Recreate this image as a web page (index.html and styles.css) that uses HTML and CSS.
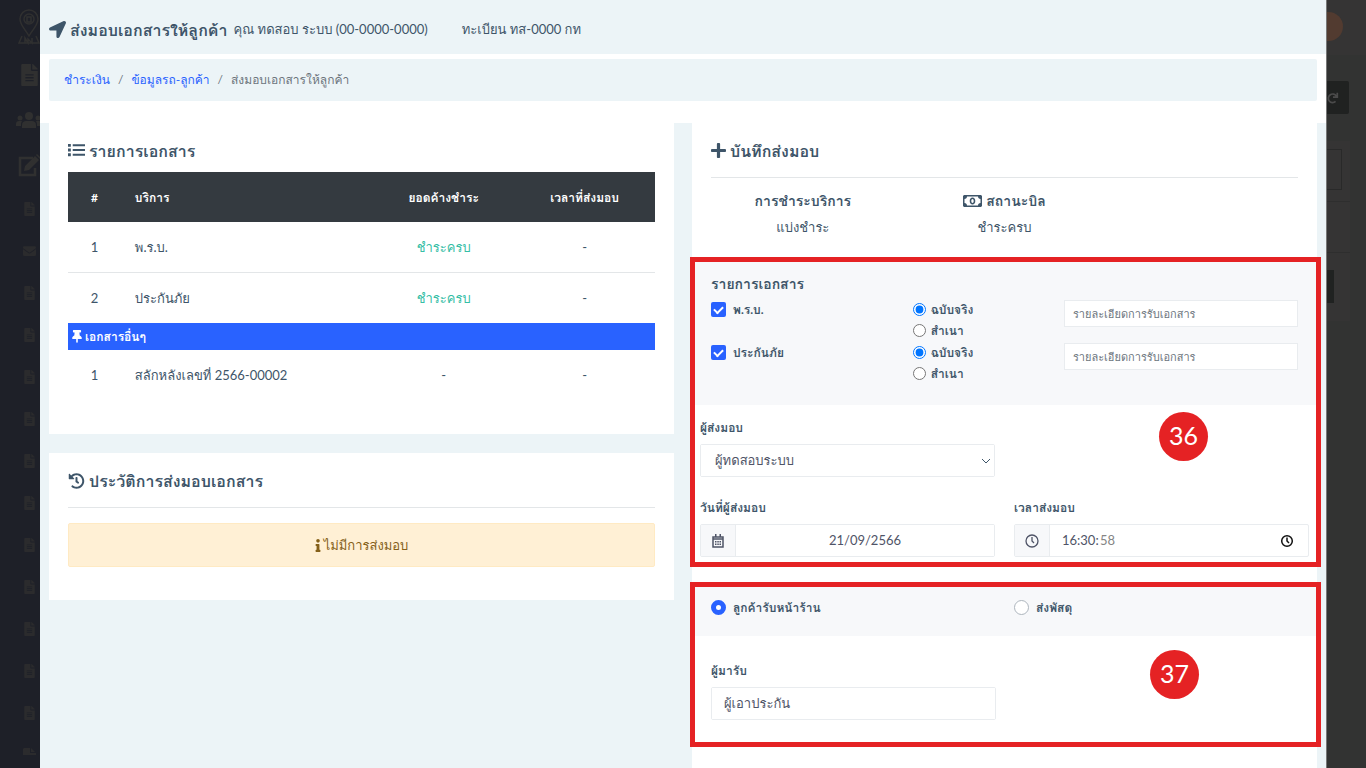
FILE: index.html
```html
<!DOCTYPE html>
<html lang="th">
<head>
<meta charset="utf-8">
<meta name="viewport" content="width=device-width, initial-scale=1">
<title>ส่งมอบเอกสารให้ลูกค้า</title>
<link rel="stylesheet" href="styles.css">
</head>
<body>
<svg class="sprite" aria-hidden="true">
  <symbol id="file" viewBox="0 0 384 512"><path fill-rule="evenodd" d="M224 136V0H24C11 0 0 11 0 24v464c0 13 11 24 24 24h336c13 0 24-11 24-24V160H248c-13 0-24-11-24-24zM96 236h192v32H96zm0 68h192v32H96zm0 68h192v32H96zM384 122v6H256V0h6c6 0 12 3 17 7l98 98c4 5 7 11 7 17z"/></symbol>
  <symbol id="mail" viewBox="0 0 512 512"><path d="M502 191c4-3 10 0 10 5v204c0 26-22 48-48 48H48c-26 0-48-22-48-48V196c0-5 6-8 10-5 22 17 52 40 155 114 21 16 57 48 91 48s71-33 91-48c103-74 133-97 155-114zM256 320c23 0 57-29 74-42 133-96 143-105 173-128 6-5 9-12 9-19v-19c0-26-22-48-48-48H48c-26 0-48 22-48 48v19c0 7 3 14 9 19 30 23 40 32 173 128 17 13 51 42 74 42z"/></symbol>
</svg>
<div class="app">
  <nav class="sidebar" aria-label="เมนูหลัก">
    <svg class="side-logo" viewBox="0 0 24 36" fill="none" stroke="currentColor" stroke-width="1.500"><path d="M12 27C8 20 3 16 3 10a9 9 0 0 1 18 0c0 6-5 10-9 17z"/><circle cx="12" cy="10" r="5"/><path d="M10 8h4v5h-4zM5 27l-3 7h20l-3-7M8 34v-5l3 5v-4l4 4v-5"/></svg>
    <svg class="side-main"><use href="#file"/></svg>
    <svg class="side-users" viewBox="0 0 26 16"><circle cx="13" cy="4" r="4"/><path d="M6 16v-3c0-3 2-4 4-4h6c2 0 4 1 4 4v3z"/><circle cx="4" cy="6" r="2.500"/><circle cx="22" cy="6" r="2.500"/><path d="M0 14v-2c0-2 1-3 3-3h3c-1 2-1 3-1 5zM26 14v-2c0-2-1-3-3-3h-3c1 2 1 3 1 5z"/></svg>
    <svg class="side-edit" viewBox="0 0 24 22"><path d="M16 3H3v17h15v-7" fill="none" stroke="currentColor" stroke-width="2.500"/><path d="M8 11L18 1l4 4-10 10-5 1zM19 0l1-1 4 4-1 1z"/></svg>
    <svg class="side-sub"><use href="#file"/></svg>
    <svg class="side-sub"><use href="#mail"/></svg>
    <svg class="side-sub"><use href="#file"/></svg>
    <svg class="side-sub"><use href="#file"/></svg>
    <svg class="side-sub"><use href="#file"/></svg>
    <svg class="side-sub"><use href="#file"/></svg>
    <svg class="side-sub"><use href="#file"/></svg>
    <svg class="side-sub"><use href="#file"/></svg>
    <svg class="side-sub"><use href="#file"/></svg>
    <svg class="side-sub"><use href="#file"/></svg>
    <svg class="side-sub"><use href="#file"/></svg>
    <svg class="side-sub"><use href="#file"/></svg>
    <svg class="side-sub"><use href="#file"/></svg>
    <svg class="side-sub side-cut" viewBox="0 0 13 7"><path d="M1 0h6v5h6v2H0V1zM8 0l4 4H8z"/></svg>
  </nav>

  <main class="modal">
    <header class="modal-head">
      <svg class="icon-18" viewBox="0 0 512 512"><path d="M444.520 3.520L28.740 195.420c-47.970 22.390-31.980 92.750 19.190 92.750h175.910v175.910c0 51.170 70.360 67.170 92.750 19.190l191.900-415.780c15.990-38.390-25.590-79.970-63.970-63.970z"/></svg>
      <h1>ส่งมอบเอกสารให้ลูกค้า</h1>
      <span class="customer">คุณ ทดสอบ ระบบ (00-0000-0000)</span>
      <span class="plate">ทะเบียน ทส-0000 กท</span>
    </header>
    <div class="crumb-wrap">
      <nav class="crumbs" aria-label="เส้นทาง">
        <a href="#">ชำระเงิน</a><span>/</span><a href="#">ข้อมูลรถ-ลูกค้า</a><span>/</span><span>ส่งมอบเอกสารให้ลูกค้า</span>
      </nav>
    </div>

    <div class="columns">
      <div class="stack">
        <section class="card card-docs">
          <h2><svg class="icon-18" viewBox="0 0 18 16"><path d="M0 1h3v3H0zM0 6h3v3H0zM0 11h3v3H0zM5 1.500h13v2H5zM5 6.500h13v2H5zM5 11.500h13v2H5z"/></svg>รายการเอกสาร</h2>
          <table>
            <colgroup><col class="c-num"><col class="c-name"><col class="c-val"><col class="c-val"></colgroup>
            <thead><tr><th>#</th><th class="left">บริการ</th><th>ยอดค้างชำระ</th><th>เวลาที่ส่งมอบ</th></tr></thead>
            <tbody>
              <tr class="ruled"><td>1</td><td class="left">พ.ร.บ.</td><td class="paid">ชำระครบ</td><td>-</td></tr>
              <tr><td>2</td><td class="left">ประกันภัย</td><td class="paid">ชำระครบ</td><td>-</td></tr>
              <tr class="group"><th colspan="4"><svg class="pin" viewBox="0 0 384 512"><path d="M298 214L286 96h42c13 0 24-11 24-24V24c0-13-11-24-24-24H56C43 0 32 11 32 24v48c0 13 11 24 24 24h42L86 214C37 237 0 277 0 328c0 13 11 24 24 24h136v104c0 1 0 2 1 4l24 48c3 6 11 6 14 0l24-48c1-1 1-3 1-4V352h136c13 0 24-11 24-24 0-51-38-91-86-114z"/></svg>เอกสารอื่นๆ</th></tr>
              <tr><td>1</td><td class="left">สลักหลังเลขที่ 2566-00002</td><td>-</td><td>-</td></tr>
            </tbody>
          </table>
        </section>
        <section class="card card-history">
          <h2><svg class="icon-16" viewBox="0 0 512 512"><path d="M504 255.531c.253 136.640-111.180 248.372-247.820 248.468-59.015.042-113.223-20.530-155.822-54.911-11.077-8.940-11.905-25.541-1.839-35.607l11.267-11.267c8.609-8.609 22.353-9.551 31.891-1.984C173.062 425.135 212.781 440 256 440c101.705 0 184-82.311 184-184 0-101.705-82.311-184-184-184-48.814 0-93.149 18.969-126.068 49.932l50.754 50.754c10.080 10.080 2.941 27.314-11.313 27.314H24c-8.837 0-16-7.163-16-16V38.627c0-14.254 17.234-21.393 27.314-11.314l49.372 49.372C129.209 34.136 189.552 8 256 8c136.810 0 247.747 110.780 248 247.531zm-180.912 78.784l9.823-12.630c8.138-10.463 6.253-25.542-4.210-33.679L288 256.349V152c0-13.255-10.745-24-24-24h-16c-13.255 0-24 10.745-24 24v135.651l65.409 50.874c10.463 8.137 25.541 6.253 33.679-4.210z"/></svg>ประวัติการส่งมอบเอกสาร</h2>
          <hr>
          <p class="alert"><svg class="info" viewBox="0 0 192 512"><path d="M20 424h20V280H20c-11 0-20-9-20-20v-48c0-11 9-20 20-20h112c11 0 20 9 20 20v212h20c11 0 20 9 20 20v48c0 11-9 20-20 20H20c-11 0-20-9-20-20v-48c0-11 9-20 20-20zM96 0a72 72 0 1 0 0 144A72 72 0 0 0 96 0z"/></svg>ไม่มีการส่งมอบ</p>
        </section>
      </div>

      <form class="panel">
        <div class="panel-top">
          <h2><svg class="icon-plus" viewBox="0 0 448 448"><path d="M416 176H272V32c0-18-14-32-32-32h-32c-18 0-32 14-32 32v144H32c-18 0-32 14-32 32v32c0 18 14 32 32 32h144v144c0 18 14 32 32 32h32c18 0 32-14 32-32V272h144c18 0 32-14 32-32v-32c0-18-14-32-32-32z"/></svg>บันทึกส่งมอบ</h2>
          <hr>
          <dl class="summary">
            <div><dt>การชำระบริการ</dt><dd>แบ่งชำระ</dd></div>
            <div><dt><svg class="bill" viewBox="0 0 19 12"><path fill-rule="evenodd" d="M1 0h17l1 1v10l-1 1H1l-1-1V1zM4 1.500c0 1.500-1 2.500-2.500 2.500v4C3 8 4 9 4 10.500h11C15 9 16 8 17.500 8V4C16 4 15 3 15 1.500z"/><path fill-rule="evenodd" d="M9.500 2.500c1.700 0 2.800 1.500 2.800 3.500s-1.100 3.500-2.800 3.500S6.700 8 6.700 6s1.100-3.500 2.800-3.500zm0 1.500C8.800 4 8.300 4.800 8.300 6s.5 2 1.200 2 1.200-.8 1.200-2-.5-2-1.200-2z"/></svg>สถานะบิล</dt><dd>ชำระครบ</dd></div>
          </dl>
        </div>

        <section class="marked marked-docs">
          <div class="shade doc-list">
            <h3>รายการเอกสาร</h3>
            <div class="doc-row">
              <label class="check"><input type="checkbox" checked>พ.ร.บ.</label>
              <div class="kinds"><label><input type="radio" name="k1" checked>ฉบับจริง</label><label><input type="radio" name="k1">สำเนา</label></div>
              <div class="detail"><input type="text" aria-label="รายละเอียด พ.ร.บ." placeholder="รายละเอียดการรับเอกสาร"></div>
            </div>
            <div class="doc-row">
              <label class="check"><input type="checkbox" checked>ประกันภัย</label>
              <div class="kinds"><label><input type="radio" name="k2" checked>ฉบับจริง</label><label><input type="radio" name="k2">สำเนา</label></div>
              <div class="detail"><input type="text" aria-label="รายละเอียด ประกันภัย" placeholder="รายละเอียดการรับเอกสาร"></div>
            </div>
          </div>
          <div class="fields">
            <div class="field sender">
              <label for="sender">ผู้ส่งมอบ</label>
              <div class="control"><select id="sender"><option>ผู้ทดสอบระบบ</option></select><svg class="chevron" viewBox="0 0 10 6"><path d="M1 1l4 4 4-4" fill="none" stroke="currentColor"/></svg></div>
            </div>
            <div class="field">
              <label for="date">วันที่ผู้ส่งมอบ</label>
              <div class="control"><span class="addon"><svg class="cal" viewBox="0 0 12 14"><path d="M1 3h10v10H1zM1 5h10" fill="none" stroke="currentColor" stroke-width="1.500"/><path d="M3 0h1.500v3H3zM7.500 0H9v3H7.500zM3 7h1.500v1.500H3zM5.300 7h1.500v1.500H5.300zM7.500 7H9v1.500H7.500zM3 9.500h1.500V11H3zM5.300 9.500h1.500V11H5.300zM7.500 9.500H9V11H7.500z"/></svg></span><input id="date" class="date" type="text" value="21/09/2566"></div>
            </div>
            <div class="field">
              <label for="time">เวลาส่งมอบ</label>
              <div class="control"><span class="addon"><svg class="clock" viewBox="0 0 14 14" fill="none" stroke="currentColor" stroke-width="1.300"><circle cx="7" cy="7" r="6"/><path d="M7 3v4l2 2"/></svg></span><input id="time" class="time" type="text" value="16:30:"><input class="seconds" type="text" aria-label="วินาที" value="58"><button class="picker" type="button" aria-label="เลือกเวลา"><svg class="clock" viewBox="0 0 14 14" fill="none" stroke="currentColor" stroke-width="1.500"><circle cx="7" cy="7" r="5.300"/><path d="M7 3.500V7l2 2"/></svg></button></div>
            </div>
          </div>
          <span class="badge">36</span>
        </section>

        <section class="marked marked-pickup">
          <div class="shade choices">
            <label class="choice choice-first"><input type="radio" name="way" checked>ลูกค้ารับหน้าร้าน</label>
            <label class="choice"><input type="radio" name="way">ส่งพัสดุ</label>
          </div>
          <div class="receiver field">
            <label for="receiver">ผู้มารับ</label>
            <div class="control"><input id="receiver" type="text" value="ผู้เอาประกัน"></div>
          </div>
          <span class="badge badge-low">37</span>
        </section>
      </form>
    </div>
  </main>

  <aside class="backdrop">
    <div class="bd-top"><div class="avatar"></div></div>
    <div class="bd-tools"><svg viewBox="0 0 14 14" fill="none" stroke="currentColor" stroke-width="2"><path d="M10 11a5 5 0 1 1 1-6M12 1v5H7"/></svg></div>
    <div class="bd-card"><div class="bd-box"></div><div class="bd-line"></div><div class="bd-button"></div></div>
  </aside>
</div>
</body>
</html>
```
FILE: styles.css
```css
* { box-sizing: border-box; }
body {
  margin: 0;
  height: 100vh;
  overflow: hidden;
  background: #323332;
  color: #3e5569;
  font: 13px/21px Lato, Loma, "Noto Sans Thai", sans-serif;
}
h1, h2, h3, p, dl, dd { margin: 0; }
svg { flex: none; }
svg:not([fill]) { fill: currentColor; }
input, select, button { font: inherit; color: #4f5467; }
hr { width: 100%; margin: 0; border: 0; border-top: 1px solid #e3e6e8; }
.sprite { display: none; }

.app { display: grid; grid-template-columns: 40px minmax(0, 1fr) 40px; height: 100vh; overflow: hidden; }

.sidebar { display: flex; flex-direction: column; align-items: center; width: 58px; overflow: hidden; background: #1e2028; color: #303030; }
.side-logo { width: 24px; height: 36px; margin-top: 9px; }
.side-main { width: 17px; height: 22px; margin-top: 19px; }
.side-users { width: 26px; height: 16px; margin-top: 26px; }
.side-edit { width: 24px; height: 22px; margin-top: 27px; overflow: visible; }
.side-sub { width: 13px; height: 14px; margin-top: 28px; color: #2b2b2d; }
.side-edit + .side-sub { margin-top: 25px; }
.side-sub.side-cut { height: 7px; }

.modal { position: relative; display: flex; flex-direction: column; overflow: hidden; background: #ecf4f7; }
.modal-head { display: flex; align-items: center; height: 54px; padding: 5px 9px 0; }
.modal-head h1 { margin: 0 6px 0 4px; font-size: 16px; line-height: 26px; }
.plate { margin-left: 34px; }
.icon-18 { width: 17px; height: 17px; }
.icon-16 { width: 17px; height: 16px; }
.icon-plus { width: 15px; height: 15px; }

.crumb-wrap { flex: none; height: 69px; padding: 5px 9px; background: #fff; }
.crumbs { display: flex; align-items: center; gap: 8px; height: 42px; padding: 0 15px 1px; border-radius: 2px; background: #ecf4f7; color: #6c757d; font-size: 12px; }
.crumbs a { color: #2962ff; text-decoration: none; }

.columns { display: grid; grid-template-columns: minmax(0, 1fr) minmax(0, 1fr); flex: 1; gap: 18px; padding: 0 9px; }
.stack { display: flex; flex-direction: column; gap: 19px; }
.card { padding: 15px 19px 33px; background: #fff; }
h2 { display: flex; align-items: center; gap: 4px; height: 25px; font-size: 16px; line-height: 25px; }
.card-docs { padding-bottom: 34px; }
.card-history hr { margin: 14px 0 15px; }

table { width: 100%; margin-top: 9px; table-layout: fixed; border-collapse: separate; border-spacing: 0; }
.c-num { width: 9%; }
.c-name { width: 43%; }
.c-val { width: 24%; }
th, td { height: 50px; padding: 0 14px; text-align: center; }
thead { background: #343a40; color: #fff; }
thead th { font-size: 12px; }
.left { text-align: left; }
.paid { color: #36bea6; }
.ruled td { height: 51px; border-bottom: 1px solid #e3e6e8; }
.group th { height: 27px; padding: 0 4px; background: #2962ff; color: #fff; font-size: 12px; text-align: left; line-height: 27px; }
.pin { width: 10px; height: 13px; margin-right: 3px; vertical-align: -2px; }
.alert { display: flex; align-items: center; justify-content: center; gap: 3px; height: 44px; border: 1px solid #ffeac3; border-radius: 2px; background: #fff0d5; color: #856019; }
.info { width: 6px; height: 13px; }

.panel { background: #fff; }
.panel-top { padding: 15px 19px 22px; }
.panel-top hr { margin: 14px 0 12px; }
.summary { display: grid; grid-template-columns: repeat(3, 1fr); margin: 0 -9px; text-align: center; }
dt { display: flex; align-items: center; justify-content: center; gap: 4px; font-size: 14px; font-weight: 700; }
dd { margin-top: 6px; }
.summary { height: 47px; }
.bill { width: 19px; height: 12px; }

.marked { position: relative; }
.marked::after { content: ""; position: absolute; inset: -2px -4px -2px -2px; border: 5px solid #e52224; pointer-events: none; }
.marked-docs { padding-bottom: 8px; }
.shade { padding: 0 19px; background: #f7f8fa; }
.doc-list { padding-top: 14px; padding-bottom: 20px; }
h3 { margin-bottom: 5px; font-size: 14px; line-height: 21px; }
.doc-row { display: grid; grid-template-columns: 4fr 3fr 5fr; height: 43px; margin: 0 -9px; }
.doc-row > * { padding: 0 9px; }
.doc-row label { display: flex; align-items: center; height: 21px; font-size: 12px; font-weight: 700; }
.check, .choice { gap: 7px; }
.kinds label { gap: 5px; }
.kinds input { width: 13px; height: 13px; margin: 0; accent-color: #0075ff; }
.check input { display: grid; place-items: center; appearance: none; width: 15px; height: 15px; margin: 0; border-radius: 2px; background: #2962ff; }
.check input::after { content: ""; width: 7px; height: 4px; margin-bottom: 2px; border: solid #fff; border-width: 0 0 2px 2px; transform: rotate(-45deg); }
.detail input { width: 100%; height: 27px; margin-top: 1px; padding: 0 8px; border: 1px solid #e9ecef; background: #fff; font-size: 11px; }
::placeholder { color: #6c757d; opacity: 1; }

.fields { display: grid; grid-template-columns: minmax(0, 1fr) minmax(0, 1fr); gap: 20px 19px; padding: 12px 8px 0; }
.sender { grid-column: 1; }
.field:nth-child(2) { grid-column: 1; }
.field > label { display: block; margin-bottom: 6px; font-size: 12px; font-weight: 700; }
.control { position: relative; display: flex; height: 33px; border: 1px solid #e9ecef; border-radius: 2px; }
.control input, .control select { flex: 1; width: 0; min-width: 0; padding: 0 12px; border: 0; background: #fff; }
.control select { appearance: none; padding: 0 14px; }
.chevron { position: absolute; right: 3px; top: 13px; width: 10px; height: 6px; }
.addon { display: flex; align-items: center; justify-content: center; width: 35px; border-right: 1px solid #e9ecef; background: #f7f8fa; color: #4f5467; }
.cal { width: 12px; height: 14px; }
.clock { width: 14px; height: 14px; }
.control .date { text-align: center; }
.control .time { flex: none; width: 50px; padding: 0 0 0 12px; }
.control .seconds { padding: 0; color: #858585; }
.picker { width: 42px; padding: 0; border: 0; background: none; color: #111; line-height: 0; }

.marked-pickup { margin-top: 19px; padding-bottom: 25px; }
.choices { display: grid; grid-template-columns: minmax(0, 1fr) minmax(0, 1fr); gap: 19px; height: 52px; padding: 13px 8px 0; }
.choice { display: flex; align-items: center; height: 21px; font-size: 12px; font-weight: 700; }
.choice-first { margin-left: 11px; }
.choice input { appearance: none; width: 15px; height: 15px; margin: 0; border: 1px solid #adb5bd; border-radius: 50%; background: #fff; }
.choice input:checked { border: 5px solid #2962ff; }
.receiver { width: 50%; padding: 24px 9px 0 19px; }
.badge { position: absolute; z-index: 1; top: 153px; right: 109px; width: 49px; height: 49px; border-radius: 50%; background: #e52224; color: #fff; font-size: 25px; line-height: 47px; text-align: center; }
.badge-low { top: 66px; right: 118px; }

.backdrop { color: #4b4b4b; background: #323332; border-left: 1px solid #777; overflow: hidden; }
.bd-top { height: 55px; padding-top: 12px; background: #353434; overflow: hidden; }
.avatar { width: 29px; height: 29px; margin-left: -13px; border-radius: 50%; background: #523b30; }
.bd-tools { display: flex; align-items: center; width: 22px; height: 33px; margin-top: 26px; border-radius: 0 2px 2px 0; background: #202221; }
.bd-tools svg { width: 12px; height: 14px; }
.bd-card { width: 23px; height: 180px; margin-top: 27px; padding-top: 8px; background: #353434; }
.bd-box { width: 15px; height: 41px; border: 1px solid #292929; border-left: 0; }
.bd-line { height: 52px; margin-top: 11px; border: solid #2e2e2e; border-width: 1px 0; }
.bd-button { width: 7px; height: 33px; margin-top: 17px; background: #202221; }
```
